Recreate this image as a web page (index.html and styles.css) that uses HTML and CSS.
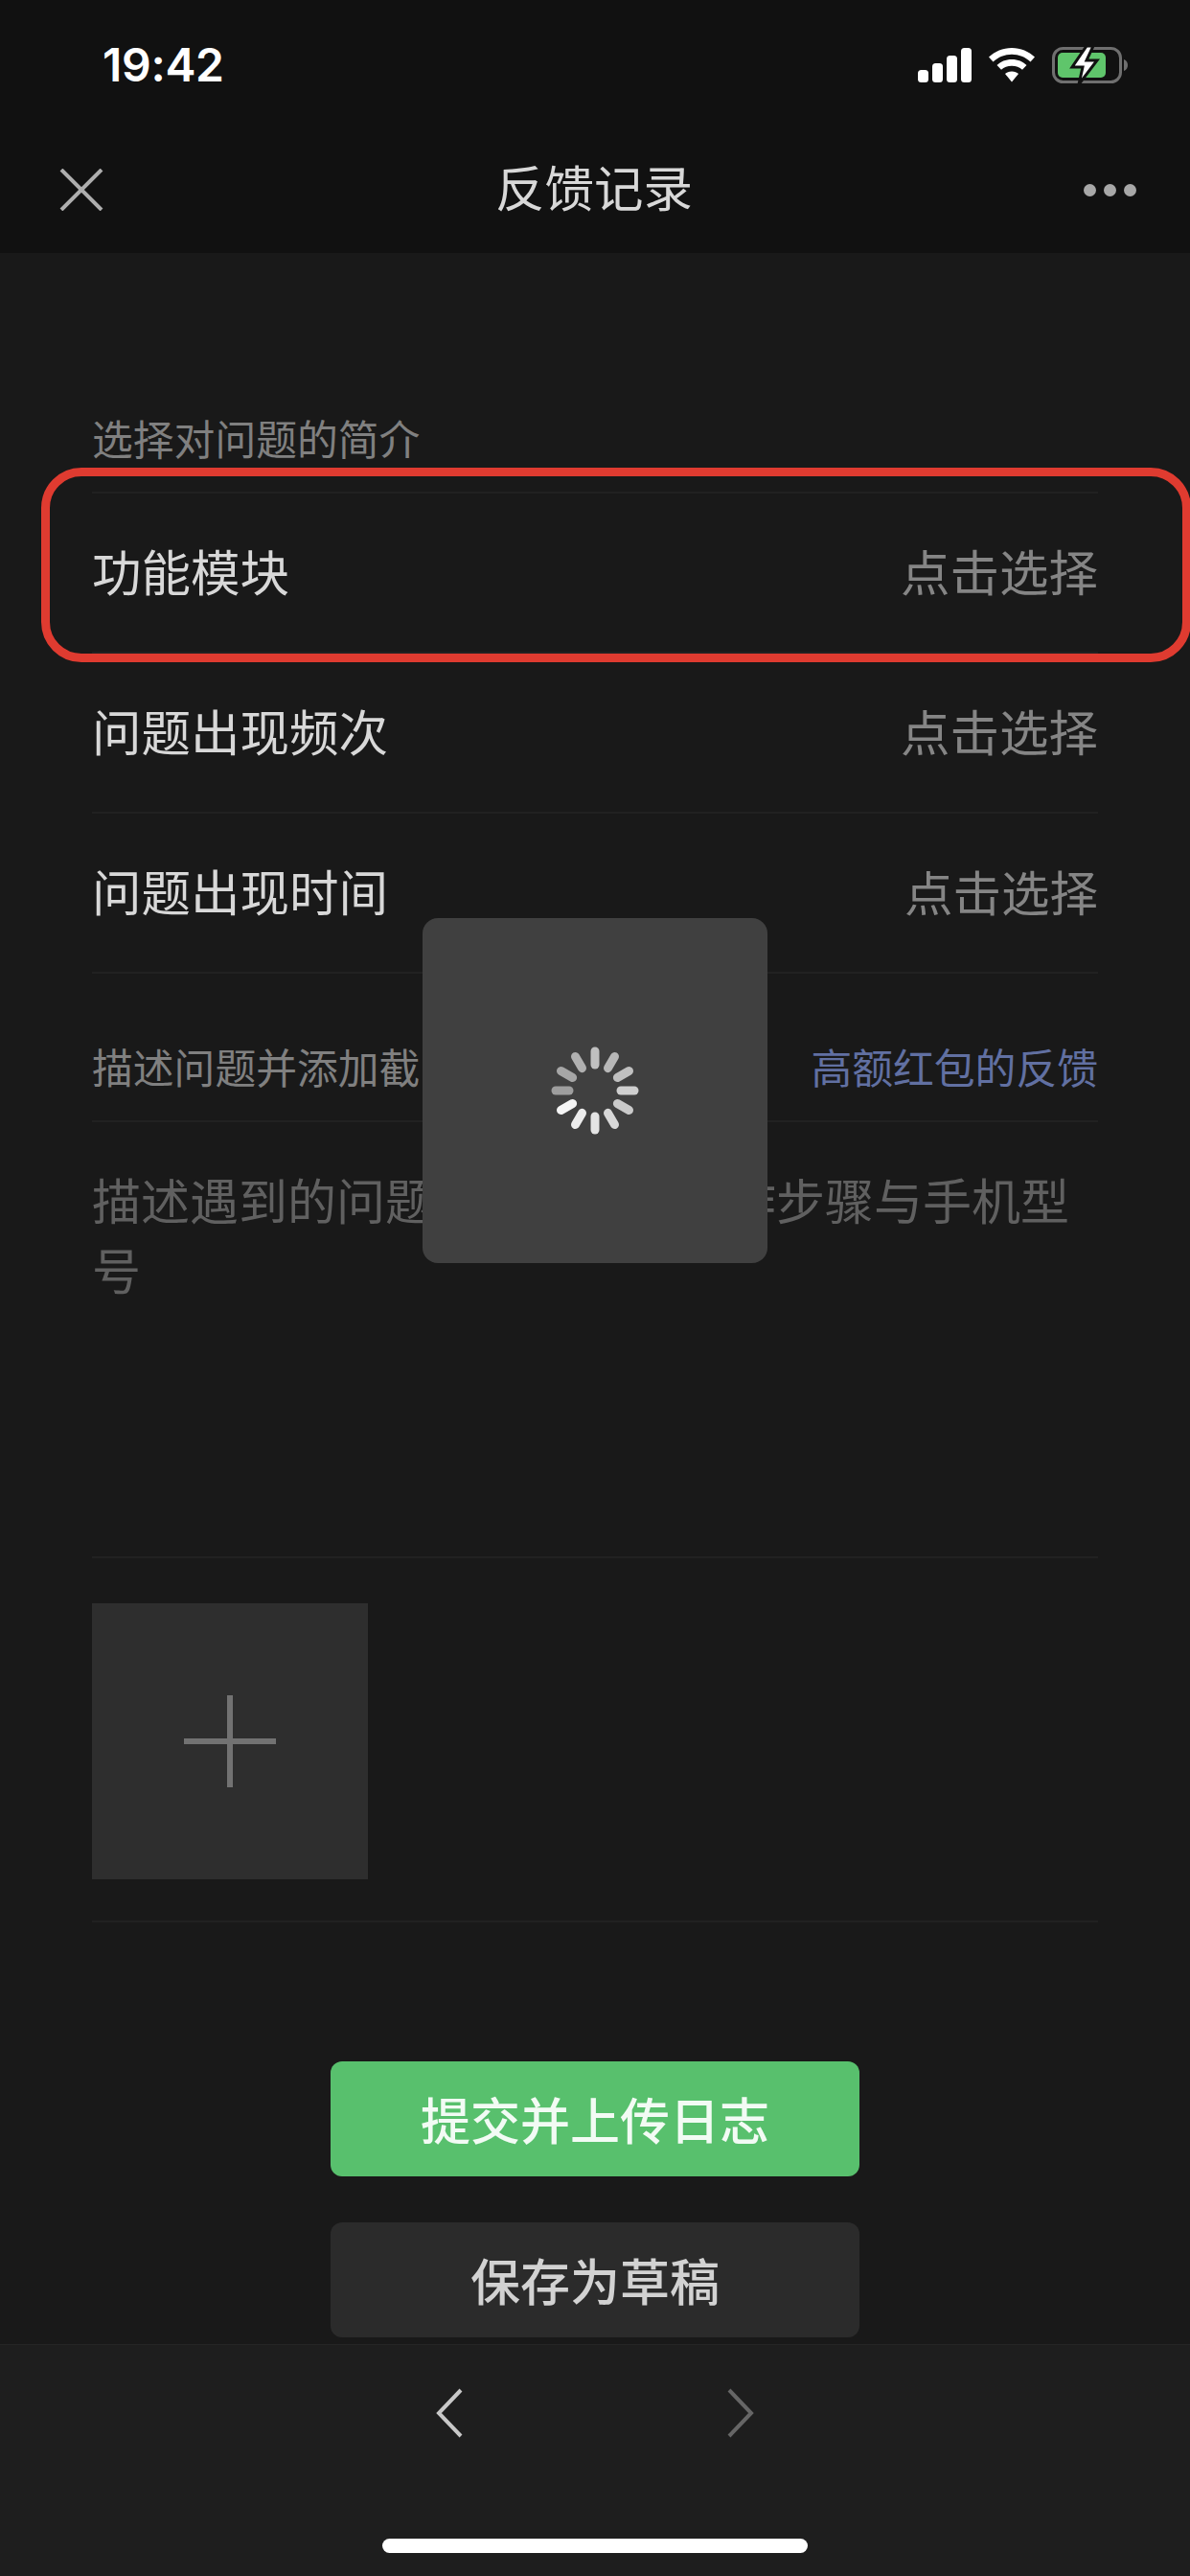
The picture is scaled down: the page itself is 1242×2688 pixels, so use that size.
FILE: index.html
```html
<!DOCTYPE html>
<html lang="zh-CN">
<head>
<meta charset="utf-8">
<title>反馈记录</title>
<link rel="stylesheet" href="styles.css">
</head>
<body>
<div class="screen">
  <header class="top">
    <div class="status">
      <span class="time">19:42</span>
      <div class="status-icons">
        <svg class="sig" width="56" height="36" viewBox="0 0 56 36"><rect x="0" y="23" width="11" height="13" rx="3.5"/><rect x="15" y="16" width="11" height="20" rx="3.5"/><rect x="30" y="8" width="11" height="28" rx="3.5"/><rect x="45" y="0" width="11" height="36" rx="3.5"/></svg>
        <svg class="wifi" width="48" height="36" viewBox="0 0 48 36"><path d="M24 0C14.500 0 6.500 3.700 0 9.500L4.500 14.500C10 9.600 16.500 6.800 24 6.800S38 9.600 43.500 14.500L48 9.500C41.500 3.700 33.500 0 24 0Z"/><path d="M24 12C17.500 12 12.500 14.300 8.500 18L13 22.800C16 20.200 19.500 18.800 24 18.800S32 20.200 35 22.800L39.500 18C35.500 14.300 30.500 12 24 12Z"/><path d="M24 24.500C21 24.500 18.800 25.400 17 27L24 35.500L31 27C29.200 25.400 27 24.500 24 24.500Z"/></svg>
        <svg class="batt" width="80" height="38" viewBox="0 0 80 38"><rect x="1.500" y="1.500" width="70" height="35" rx="10" fill="none" stroke="#6f6f6f" stroke-width="3"/><path d="M75 13C78 14 79 16.500 79 19S78 24 75 25Z" fill="#6f6f6f"/><rect x="6" y="6" width="50" height="26" rx="5" fill="#5fc56b"/><path d="M36 -1L21 21H32L28 39L47 14H36L43 -1Z" fill="#fff" stroke="#111" stroke-width="3" stroke-linejoin="miter"/></svg>
      </div>
    </div>
    <div class="nav">
      <svg class="nav-x" width="46" height="44" viewBox="0 0 46 44"><path d="M2 1L44 43M44 1L2 43" stroke="#aeaeae" stroke-width="4" fill="none"/></svg>
      <h1 class="title">反馈记录</h1>
      <div class="dots"><i></i><i></i><i></i></div>
    </div>
  </header>

  <main class="content">
    <div class="label first">选择对问题的简介</div>
    <div class="row"><span class="key">功能模块</span><span class="val">点击选择</span></div>
    <div class="row"><span class="key">问题出现频次</span><span class="val">点击选择</span></div>
    <div class="row"><span class="key">问题出现时间</span><span class="val val-small">点击选择</span></div>
    <div class="label second"><span>描述问题并添加截图</span><span class="link">高额红包的反馈</span></div>
    <div class="desc">描述遇到的问题，以及相关操作步骤与手机型号</div>
    <div class="upload">
      <div class="add"><span class="plus"></span></div>
    </div>
    <div class="actions">
      <div class="btn primary">提交并上传日志</div>
      <div class="btn secondary">保存为草稿</div>
    </div>
  </main>

  <footer class="bottom">
    <div class="arrows">
      <svg width="28" height="52" viewBox="0 0 28 52"><path d="M26 2L3 26L26 50" stroke="#c8c8c8" stroke-width="4" fill="none"/></svg>
      <svg width="28" height="52" viewBox="0 0 28 52"><path d="M2 2L25 26L2 50" stroke="#666" stroke-width="4" fill="none"/></svg>
    </div>
    <div class="home"></div>
  </footer>

  <div class="highlight"></div>
  <div class="toast">
    <svg width="100" height="100" viewBox="-50 -50 100 100" stroke-width="9" stroke-linecap="round" fill="none">
      <line y1="-41" y2="-27" stroke="#c0c0c0"/>
      <line y1="-41" y2="-27" stroke="#b8b8b8" transform="rotate(30)"/>
      <line y1="-41" y2="-27" stroke="#c0c0c0" transform="rotate(60)"/>
      <line y1="-41" y2="-27" stroke="#cfcfcf" transform="rotate(90)"/>
      <line y1="-41" y2="-27" stroke="#cacaca" transform="rotate(120)"/>
      <line y1="-41" y2="-27" stroke="#d8d8d8" transform="rotate(150)"/>
      <line y1="-41" y2="-27" stroke="#e4e4e4" transform="rotate(180)"/>
      <line y1="-41" y2="-27" stroke="#ececec" transform="rotate(210)"/>
      <line y1="-41" y2="-27" stroke="#f5f5f5" transform="rotate(240)"/>
      <line y1="-41" y2="-27" stroke="#9e9e9e" transform="rotate(270)"/>
      <line y1="-41" y2="-27" stroke="#a6a6a6" transform="rotate(300)"/>
      <line y1="-41" y2="-27" stroke="#b0b0b0" transform="rotate(330)"/>
    </svg>
  </div>
</div>
</body>
</html>
```
FILE: styles.css
```css
* { box-sizing: border-box; margin: 0; padding: 0; }
html, body { width: 1242px; height: 2688px; overflow: hidden; background: #191919; }
body { font-family: "Noto Sans CJK SC", "Noto Sans", sans-serif; }
.screen { position: relative; width: 1242px; height: 2688px; display: flex; flex-direction: column; }

.top { height: 264px; background: #111; flex: none; }
.status { height: 132px; padding: 47px 64px 0 107px; display: flex; justify-content: space-between; align-items: flex-start; }
.time { font-family: Inter, "Liberation Sans", sans-serif; font-size: 48px; font-weight: 600; line-height: 42px; color: #fff; letter-spacing: -.3px; }
.status-icons { display: flex; align-items: center; gap: 18px; padding-top: 2px; }
.sig, .wifi { fill: #fff; }
.nav { height: 132px; display: flex; align-items: center; justify-content: space-between; padding: 0 56px 0 62px; position: relative; }
.title { position: absolute; left: -1px; right: 1px; top: 27px; text-align: center; font-size: 51.5px; font-weight: 400; line-height: 70px; color: #d8d8d8; }
.dots { display: flex; gap: 8px; }
.dots i { width: 13px; height: 13px; border-radius: 50%; background: #a8a8a8; }

.content { flex: 1; padding: 0 96px; display: flex; flex-direction: column; min-height: 0; }
.label { display: flex; justify-content: space-between; align-items: center; font-size: 42.8px; line-height: 60px; color: #808080; border-bottom: 2px solid #212121; }
.first { margin-top: 163px; height: 88px; padding-bottom: 28px; }
.second { height: 155px; padding-top: 38px; }
.link { color: #6170a2; }
.row { display: flex; justify-content: space-between; align-items: center; height: 167px; padding-bottom: 6px; border-bottom: 2px solid #212121; font-size: 51.5px; line-height: 70px; }
.key { color: #d8d8d8; }
.val { color: #858585; }
.val-small { font-size: 50.5px; }
.desc { height: 455px; padding-top: 44px; font-size: 51px; line-height: 73px; color: #606060; border-bottom: 2px solid #212121; }
.upload { height: 380px; padding-top: 47px; border-bottom: 2px solid #212121; }
.add { width: 288px; height: 288px; background: #2e2e2e; display: flex; align-items: center; justify-content: center; }
.plus { display: block; width: 96px; height: 96px; background:
  linear-gradient(#727272, #727272) center / 96px 6px no-repeat,
  linear-gradient(#727272, #727272) center / 6px 96px no-repeat; }
.actions { margin-top: 145px; display: flex; flex-direction: column; align-items: center; gap: 48px; }
.btn { width: 552px; height: 120px; padding-bottom: 2px; border-radius: 12px; display: flex; align-items: center; justify-content: center; font-size: 52px; font-weight: 500; }
.primary { background: #58c06d; color: #f2fbf4; }
.secondary { background: #2b2b2b; color: #d2d2d2; }

.bottom { position: relative; flex: none; height: 242px; background: #1e1e1e; border-top: 1px solid #262626; }
.arrows { display: flex; justify-content: center; gap: 276px; padding-top: 45px; }
.home { position: absolute; left: 399px; bottom: 24px; width: 444px; height: 15px; border-radius: 8px; background: #fff; }

.highlight { position: absolute; left: 43px; top: 488px; width: 1200px; height: 203px; border: 9.5px solid #df3b30; border-radius: 42px; }
.toast { position: absolute; left: 441px; top: 958px; width: 360px; height: 360px; border-radius: 16px; background: #404040; display: flex; align-items: center; justify-content: center; }
```
